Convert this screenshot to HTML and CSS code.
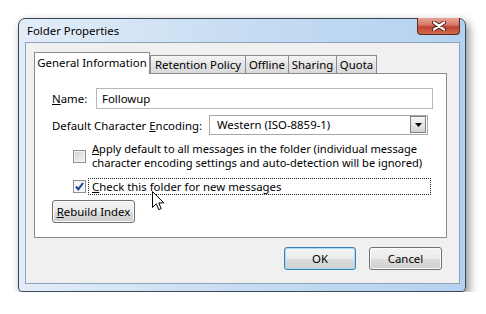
FILE: index.html
```html
<!DOCTYPE html>
<html lang="en">
<head>
  <meta charset="UTF-8" />
  <title>Folder Properties</title>
  <link rel="stylesheet" href="styles.css">
</head>
<body>
  <div class="window">
    <div class="titlebar">
      <span class="title">Folder Properties</span>
      <span class="close">
        <svg width="14" height="10" viewBox="0 0 14 10">
          <path d="M2 1.5 L12 8.5 M12 1.5 L2 8.5" stroke="#4a1a12" stroke-width="4" stroke-linecap="round"/>
          <path d="M2 1.5 L12 8.5 M12 1.5 L2 8.5" stroke="#fff" stroke-width="2.2" stroke-linecap="round"/>
        </svg>
      </span>
    </div>

    <div class="client">
      <div class="tabs">
        <div class="tab active w-general">General Information</div>
        <div class="tab w-retention">Retention Policy</div>
        <div class="tab w-offline">Offline</div>
        <div class="tab w-sharing">Sharing</div>
        <div class="tab w-quota">Quota</div>
      </div>

      <div class="pane">
        <div class="row name-row">
          <label><u>N</u>ame:</label>
          <div class="textbox">Followup</div>
        </div>

        <div class="row enc-row">
          <label>Default Character <u>E</u>ncoding:</label>
          <div class="select">
            <span class="value">Western (ISO-8859-1)</span>
            <span class="drop">
              <svg width="7" height="4" viewBox="0 0 7 4"><path d="M0 0 H7 L3.5 4 Z" fill="#000"/></svg>
            </span>
          </div>
        </div>

        <div class="check multi">
          <span class="box"></span>
          <span class="text"><span class="line"><u>A</u>pply default to all messages in the folder (individual message</span><span class="line">character encoding settings and auto-detection will be ignored)</span></span>
        </div>

        <div class="check single">
          <span class="box">
            <svg width="11" height="11" viewBox="0 0 11 11"><path d="M2 5.5 L4.3 8.3 L9 2" fill="none" stroke="#1f3f8f" stroke-width="2"/></svg>
          </span>
          <span class="text focus"><u>C</u>heck this folder for new messages</span>
        </div>

        <button class="btn rebuild"><u>R</u>ebuild Index</button>

        <svg class="cursor" width="13" height="20" viewBox="0 0 13 20">
          <path d="M0.5 0.5 L0.5 16.5 L4.3 12.8 L6.8 18.6 L9.2 17.6 L6.8 11.9 L11.8 11.9 Z" fill="#fff" stroke="#000" stroke-width="1"/>
        </svg>
      </div>

      <div class="footer">
        <button class="btn default ok">OK</button>
        <button class="btn cancel">Cancel</button>
      </div>
    </div>
  </div>
</body>
</html>
```

FILE: styles.css
```css
* {
  box-sizing: border-box;
  margin: 0;
  padding: 0;
}

body {
  background-color: #fff;
  font-family: "Noto Sans", "Open Sans", sans-serif;
  font-size: 11.4px;
  color: #000;
}

u {
  text-decoration: underline;
  text-underline-offset: 1px;
}

.window {
  margin: 18px 0 0 18px;
  width: 448px;
  height: 274px;
  border: 1px solid #3b4858;
  border-radius: 7px 7px 4px 4px;
  background: linear-gradient(to right, #e2edf8, #c4dbf2 55%, #b4d2f0);
  box-shadow: 3px 4px 10px rgba(0, 0, 0, 0.45);
  padding: 0 5px 7px 6px;
  display: flex;
  flex-direction: column;
}

.titlebar {
  height: 23px;
  display: flex;
  align-items: flex-start;
}

.title {
  margin: 5px 0 0 2px;
  line-height: 14px;
}

.close {
  margin-left: auto;
  margin-top: -1px;
  width: 43px;
  height: 17px;
  border: 1px solid #5b2a22;
  border-top: none;
  border-radius: 0 0 4px 4px;
  background: linear-gradient(#e9a597, #d27563 45%, #c0432f 55%, #cf6a4c);
  display: flex;
  align-items: center;
  justify-content: center;
}

.client {
  flex: 1;
  border: 1px solid #8da1b7;
  background-color: #f0f0f0;
  padding: 9px 12px 0 8px;
  display: flex;
  flex-direction: column;
}

/* tabs */

.tabs {
  display: flex;
  align-items: flex-end;
  height: 21px;
  position: relative;
  z-index: 1;
}

.tab {
  height: 18px;
  border: 1px solid #898c95;
  border-bottom: none;
  background: linear-gradient(#f5f5f5, #e4e4e4 50%, #d9d9d9);
  text-align: center;
  line-height: 17px;
  margin-left: -1px;
  white-space: nowrap;
}

.tab.active {
  height: 22px;
  margin-bottom: -1px;
  margin-left: 0;
  background: #fff;
  line-height: 20px;
}

.tab.active + .tab {
  margin-left: 0;
}

.w-general { width: 116px; }
.w-retention { width: 96px; }
.w-offline { width: 44px; }
.w-sharing { width: 49px; }
.w-quota { width: 41px; }

.pane {
  height: 165px;
  border: 1px solid #898c95;
  background-color: #fff;
  padding: 14px 13px 0 17px;
  position: relative;
}

.row {
  display: flex;
  align-items: center;
}

.row label {
  flex: 1;
  white-space: nowrap;
}

.name-row {
  height: 21px;
}

.textbox {
  width: 337px;
  height: 21px;
  border: 1px solid #b8b8b8;
  padding-left: 5px;
  line-height: 19px;
}

.enc-row {
  height: 20px;
  margin-top: 6px;
}

.select {
  width: 219px;
  height: 20px;
  margin-right: 5px;
  border: 1px solid #a8a8a8;
  display: flex;
}

.select .value {
  flex: 1;
  padding-left: 7px;
  line-height: 18px;
}

.drop {
  width: 16px;
  margin: 0 1px 1px 0;
  border: 1px solid #7f7f7f;
  background: linear-gradient(#f6f6f6, #e6e6e6 50%, #d3d3d3);
  display: flex;
  align-items: center;
  justify-content: center;
}

/* checkboxes */

.check {
  display: flex;
  align-items: center;
  margin-left: 21px;
}

.check.multi {
  margin-top: 7px;
}

.check.multi .text {
  display: flex;
  flex-direction: column;
  font-size: 11.1px;
}

.check.multi .line {
  height: 14px;
  line-height: 14px;
}

.check.single {
  margin-top: 8px;
  height: 17px;
}

.box {
  width: 13px;
  height: 13px;
  border: 1px solid #8e8f8f;
  background: linear-gradient(135deg, #d2d2d2, #f6f6f6);
  box-shadow: inset 0 0 0 1px #f4f4f4;
  display: flex;
  align-items: center;
  justify-content: center;
  flex-shrink: 0;
}

.check.single .box {
  background: #f4f4f4;
}

.text {
  margin-left: 2px;
  padding: 0 4px;
  white-space: nowrap;
}

.text.focus {
  flex: 1;
  height: 17px;
  margin-right: 2px;
  border: 1px dotted #222;
  padding-left: 3px;
  line-height: 15px;
}

/* buttons */

.btn {
  font-family: inherit;
  font-size: inherit;
  color: #000;
  height: 23px;
  border: 1px solid #707070;
  border-radius: 3px;
  background: linear-gradient(#f3f3f3, #ebebeb 50%, #dddddd 51%, #cfcfcf);
  box-shadow: inset 0 0 0 1px #fbfbfb;
  line-height: 20px;
}

.rebuild {
  display: block;
  width: 83px;
  margin-top: 5px;
}

.cursor {
  position: absolute;
  left: 117px;
  top: 117px;
}

.footer {
  display: flex;
  justify-content: flex-end;
  gap: 13px;
  margin-top: 9px;
  padding-right: 5px;
}

.ok {
  width: 72px;
}

.cancel {
  width: 73px;
}

.btn.default {
  border-color: #3c7fb1;
  box-shadow: inset 0 0 0 1px #a6dcf4;
}
```
